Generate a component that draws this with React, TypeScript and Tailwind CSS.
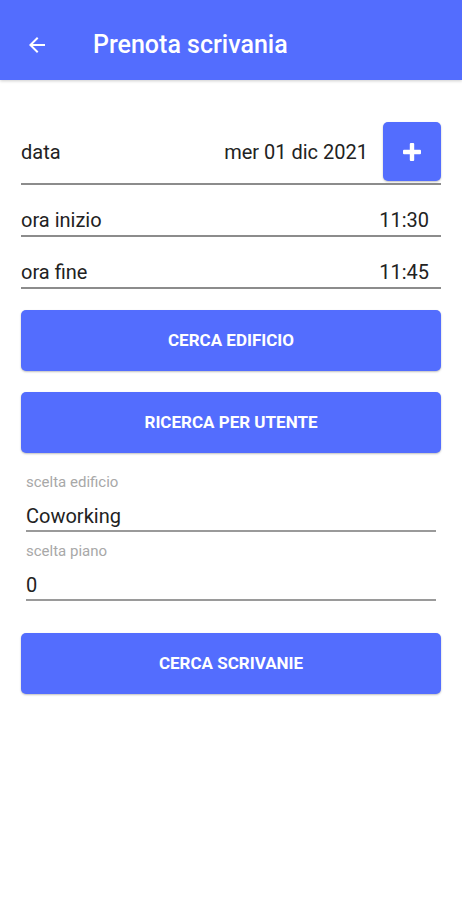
import React from "react";

const blue = "bg-[#536DFE]";

function Row({ label, value }: { label: string; value: string }) {
  return (
    <div className="flex items-center justify-between pt-[23px] pb-[3px] pr-[12px] border-b-2 border-[#8c8c8c]">
      <span className="text-[20px] leading-[24px] text-[#222]">{label}</span>
      <span className="text-[20px] leading-[24px] text-[#222]">{value}</span>
    </div>
  );
}

function BigButton({ children, className = "" }: { children: React.ReactNode; className?: string }) {
  return (
    <button
      className={`w-full h-[61px] ${blue} rounded-[5px] shadow-[0_1px_2px_rgba(0,0,0,0.25)] text-white text-[17px] font-bold ${className}`}
    >
      {children}
    </button>
  );
}

function Field({ label, value, className = "" }: { label: string; value: string; className?: string }) {
  return (
    <div className={`px-[5px] ${className}`}>
      <div className="text-[15px] leading-[18px] text-[#a8a8a8]">{label}</div>
      <div className="mt-[13px] text-[20px] leading-[24px] text-[#222] border-b-2 border-[#9a9a9a] pb-[2px]">
        {value}
      </div>
    </div>
  );
}

export default function App() {
  return (
    <div className="w-[462px] h-[900px] bg-white" style={{ fontFamily: "Roboto, 'Noto Sans', sans-serif" }}>
      {/* Toolbar */}
      <div className={`h-[80px] ${blue} flex items-center shadow-[0_1px_3px_rgba(0,0,0,0.2)]`}>
        <svg className="ml-[25px] mt-[10px]" width="24" height="24" viewBox="0 0 24 24" fill="white">
          <path d="M20 11H7.83l5.59-5.59L12 4l-8 8 8 8 1.41-1.41L7.83 13H20v-2z" />
        </svg>
        <h1 className="ml-[44px] mt-[10px] text-white text-[25px] font-medium">Prenota scrivania</h1>
      </div>

      <div className="px-[21px]">
        {/* data row */}
        <div className="mt-[43px] flex items-center border-b-2 border-[#8c8c8c] h-[62px] pb-[2px]">
          <span className="text-[20px] text-[#222] flex-1">data</span>
          <span className="text-[20px] text-[#222] mr-[15px]">mer 01 dic 2021</span>
          <button className={`w-[58px] h-[59px] ${blue} rounded-[5px] flex items-center justify-center mb-[1px] shadow-[0_1px_2px_rgba(0,0,0,0.25)]`}>
            <svg width="20" height="20" viewBox="0 0 20 20">
              <rect x="7.8" y="1" width="4.4" height="18" rx="1" fill="white" />
              <rect x="1" y="7.8" width="18" height="4.4" rx="1" fill="white" />
            </svg>
          </button>
        </div>

        <Row label="ora inizio" value="11:30" />
        <Row label="ora fine" value="11:45" />

        <BigButton className="mt-[21px]">CERCA EDIFICIO</BigButton>
        <BigButton className="mt-[21px]">RICERCA PER UTENTE</BigButton>

        <Field label="scelta edificio" value="Coworking" className="mt-[20px]" />
        <Field label="scelta piano" value="0" className="mt-[10px]" />

        <BigButton className="mt-[32px] h-[60px]">CERCA SCRIVANIE</BigButton>
      </div>
    </div>
  );
}
